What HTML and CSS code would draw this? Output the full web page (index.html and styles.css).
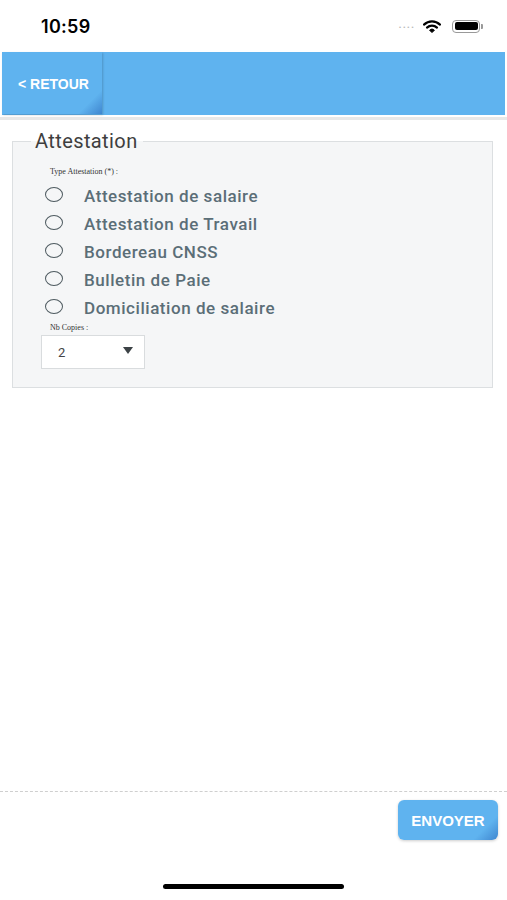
FILE: index.html
```html
<!DOCTYPE html>
<html lang="fr">
<head>
    <meta charset="UTF-8">
    <meta name="viewport" content="width=device-width, initial-scale=1.0">
    <title>Attestation</title>
    <link rel="stylesheet" href="styles.css">
</head>
<body>
    <div class="screen">
        <div class="status-bar">
            <span class="time">10:59</span>
            <div class="status-icons">
                <span class="signal">....</span>
                <svg class="wifi" width="18" height="13" viewBox="0 0 18 13">
                    <path d="M1 4.6 A11.5 11.5 0 0 1 17 4.6" fill="none" stroke="#000" stroke-width="2.2" stroke-linecap="round"/>
                    <path d="M4 7.6 A7.3 7.3 0 0 1 14 7.6" fill="none" stroke="#000" stroke-width="2.2" stroke-linecap="round"/>
                    <path d="M6.6 10.2 A3.3 3.3 0 0 1 11.4 10.2 L9 12.6 Z" fill="#000" stroke="#000" stroke-width="1" stroke-linejoin="round"/>
                </svg>
                <div class="battery">
                    <div class="battery-level"></div>
                </div>
                <div class="battery-cap"></div>
            </div>
        </div>

        <div class="topbar">
            <button class="back-btn">&lt; RETOUR</button>
        </div>
        <div class="topbar-line"></div>

        <div class="content">
            <fieldset class="form-box">
                <legend class="form-title">Attestation</legend>
                <div class="field-label">Type Attestation (*) :</div>
                <div class="radio-list">
                    <label class="radio-row"><span class="radio"></span>Attestation de salaire</label>
                    <label class="radio-row"><span class="radio"></span>Attestation de Travail</label>
                    <label class="radio-row"><span class="radio"></span>Bordereau CNSS</label>
                    <label class="radio-row"><span class="radio"></span>Bulletin de Paie</label>
                    <label class="radio-row"><span class="radio"></span>Domiciliation de salaire</label>
                </div>
                <div class="field-label">Nb Copies :</div>
                <div class="select">
                    <span>2</span>
                    <span class="caret"></span>
                </div>
            </fieldset>
        </div>

        <div class="footer">
            <button class="send-btn">ENVOYER</button>
        </div>
        <div class="home-bar"></div>
    </div>
</body>
</html>
```

FILE: styles.css
```css
:root {
    --blue: #5fb3ef;
    --text-muted: #5b6e77;
    --border-color: #dcdfe1;
}

* {
    margin: 0;
    padding: 0;
    box-sizing: border-box;
}

body {
    background-color: #ffffff;
    font-family: Roboto, 'Liberation Sans', Arial, sans-serif;
}

.screen {
    width: 507px;
    height: 900px;
    display: flex;
    flex-direction: column;
}

.status-bar {
    height: 52px;
    display: flex;
    align-items: center;
    justify-content: space-between;
    padding: 0 24px 0 41px;
}

.time {
    font-family: Inter, 'Liberation Sans', sans-serif;
    font-size: 18px;
    font-weight: 600;
    color: #000;
    letter-spacing: 0.3px;
}

.status-icons {
    display: flex;
    align-items: center;
}

.signal {
    color: #b9b9b9;
    font-size: 14px;
    letter-spacing: 0.5px;
    margin-right: 8px;
    position: relative;
    top: -3px;
}

.wifi {
    margin-right: 11px;
}

.battery {
    width: 28px;
    height: 13px;
    border: 1.5px solid #999;
    border-radius: 4px;
    padding: 1.5px;
}

.battery-level {
    width: 100%;
    height: 100%;
    background-color: #000;
    border-radius: 2px;
}

.battery-cap {
    width: 2px;
    height: 5px;
    background-color: #999;
    border-radius: 0 1px 1px 0;
    margin-left: 1px;
}

.topbar {
    height: 63px;
    margin: 0 2px;
    background-color: var(--blue);
    display: flex;
}

.back-btn {
    width: 100px;
    height: 62px;
    border: none;
    background: linear-gradient(135deg, var(--blue) 85%, #3f86cf 100%);
    color: #ffffff;
    font-family: 'Liberation Sans', Arial, sans-serif;
    font-size: 14px;
    font-weight: 700;
    box-shadow: 1px 1px 2px rgba(0, 0, 0, 0.18);
    text-align: left;
    padding-left: 16px;
    padding-top: 2px;
}

.topbar-line {
    height: 3px;
    margin-top: 2px;
    background-color: #e8e8e8;
}

.content {
    padding: 10px 14px 0 12px;
}

.form-box {
    border: 1px solid var(--border-color);
    background-color: #f5f6f7;
    padding: 13px 0 18px 28px;
}

.form-title {
    margin-left: -10px;
    padding: 0 5px 0 4px;
    font-size: 20px;
    font-weight: 400;
    color: #3e3e3e;
    line-height: 23px;
    letter-spacing: 0.4px;
}

.field-label {
    font-family: 'Liberation Serif', 'Times New Roman', serif;
    font-size: 8px;
    color: #333;
    line-height: 12px;
    padding-left: 9px;
}

.radio-list {
    display: flex;
    flex-direction: column;
    margin: 4px 0 0;
}

.radio-row {
    height: 28px;
    display: flex;
    align-items: center;
    font-size: 17px;
    font-weight: 500;
    color: var(--text-muted);
    letter-spacing: 0.55px;
}

.radio {
    width: 18px;
    height: 15px;
    border: 1.6px solid #4e5a60;
    border-radius: 50%;
    margin-left: 4px;
    margin-right: 21px;
    position: relative;
    top: -2px;
}

.select {
    width: 104px;
    height: 34px;
    margin-top: 1px;
    background-color: #ffffff;
    border: 1px solid #d9dcde;
    display: flex;
    align-items: center;
    justify-content: space-between;
    padding: 0 11px 0 16px;
    font-size: 13px;
    color: #444;
}

.caret {
    width: 0;
    height: 0;
    border-left: 5.5px solid transparent;
    border-right: 5.5px solid transparent;
    border-top: 7px solid #3c4246;
    position: relative;
    top: -2px;
}

.footer {
    margin-top: auto;
    border-top: 1px dashed #cfcfcf;
    height: 93px;
    display: flex;
    justify-content: flex-end;
    align-items: flex-start;
    padding: 8px 9px 0 0;
}

.send-btn {
    width: 100px;
    height: 40px;
    border: none;
    border-radius: 6px;
    background: linear-gradient(135deg, var(--blue) 82%, #3f86cf 100%);
    color: #ffffff;
    font-family: 'Liberation Sans', Arial, sans-serif;
    font-size: 15px;
    font-weight: 700;
    box-shadow: 0 1px 3px rgba(0, 0, 0, 0.2);
}

.home-bar {
    width: 181px;
    height: 5px;
    background-color: #000;
    border-radius: 3px;
    margin: 0 auto 11px;
}
```
